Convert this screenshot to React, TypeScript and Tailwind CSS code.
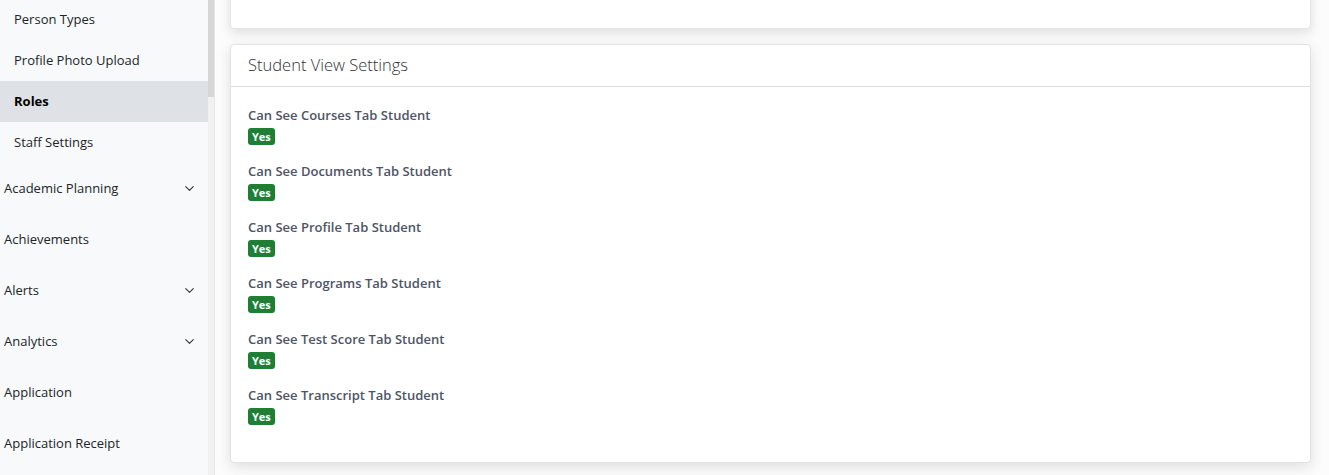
import { ChevronDown } from 'lucide-react';

const SUB_ITEMS = ['Person Types', 'Profile Photo Upload', 'Roles', 'Staff Settings'];

const TOP_ITEMS: { label: string; expandable?: boolean }[] = [
  { label: 'Academic Planning', expandable: true },
  { label: 'Achievements' },
  { label: 'Alerts', expandable: true },
  { label: 'Analytics', expandable: true },
  { label: 'Application' },
  { label: 'Application Receipt' },
];

const SETTINGS = [
  'Can See Courses Tab Student',
  'Can See Documents Tab Student',
  'Can See Profile Tab Student',
  'Can See Programs Tab Student',
  'Can See Test Score Tab Student',
  'Can See Transcript Tab Student',
];

const font = "font-['Open_Sans','Liberation_Sans',sans-serif]";

export default function App() {
  return (
    <div className={`flex h-[475px] w-full overflow-hidden bg-white ${font}`}>
      {/* Sidebar */}
      <aside className="flex h-full shrink-0 border-r border-[#e6e6e6]">
        <nav className="w-[208px] bg-[#f8f9fa] text-[13px] text-[#212529]">
          <ul className="-mt-[1px]">
            {SUB_ITEMS.map((item) => (
              <li
                key={item}
                className={`flex h-[41px] items-center pl-[14px] ${
                  item === 'Roles' ? 'bg-[#dee2e6] font-bold text-black' : ''
                }`}
              >
                {item}
              </li>
            ))}
          </ul>
          <ul>
            {TOP_ITEMS.map((item) => (
              <li key={item.label} className="flex h-[51px] items-center justify-between pl-[4px] pr-[11px]">
                <span>{item.label}</span>
                {item.expandable && <ChevronDown size={15} strokeWidth={1.75} className="text-[#333]" />}
              </li>
            ))}
          </ul>
        </nav>
        {/* scrollbar */}
        <div className="flex w-[6px] flex-col bg-[#f1f1f1]">
          <div className="h-[97px] bg-[#d6d6d6]" />
        </div>
      </aside>

      {/* Main */}
      <main className="flex-1 bg-[#fcfcfc] pl-[15px] pr-[18px]">
        <div className="-mt-[20px] h-[49px] rounded border border-[#e5e5e5] bg-white shadow-[0_4px_12px_rgba(0,0,0,0.12)]" />

        <section className="mt-[15px] rounded border border-[#e2e2e2] bg-white shadow-[0_4px_14px_rgba(0,0,0,0.12)]">
          <header className="flex h-[42px] items-center border-b border-[#dedede] px-[17px] text-[16.5px] font-light text-[#333]">
            Student View Settings
          </header>
          <div className="flex flex-col gap-[16px] px-[17px] pt-[18px] pb-[37px]">
            {SETTINGS.map((s) => (
              <div key={s} className="flex flex-col items-start">
                <div className="text-[13px] leading-[20px] font-semibold text-[#4d5566]">{s}</div>
                <span className="mt-[3px] flex h-[17px] items-center rounded-[3px] bg-[#1e7e34] px-[4px] text-[11px] leading-none font-bold text-white">
                  Yes
                </span>
              </div>
            ))}
          </div>
        </section>
      </main>
    </div>
  );
}
